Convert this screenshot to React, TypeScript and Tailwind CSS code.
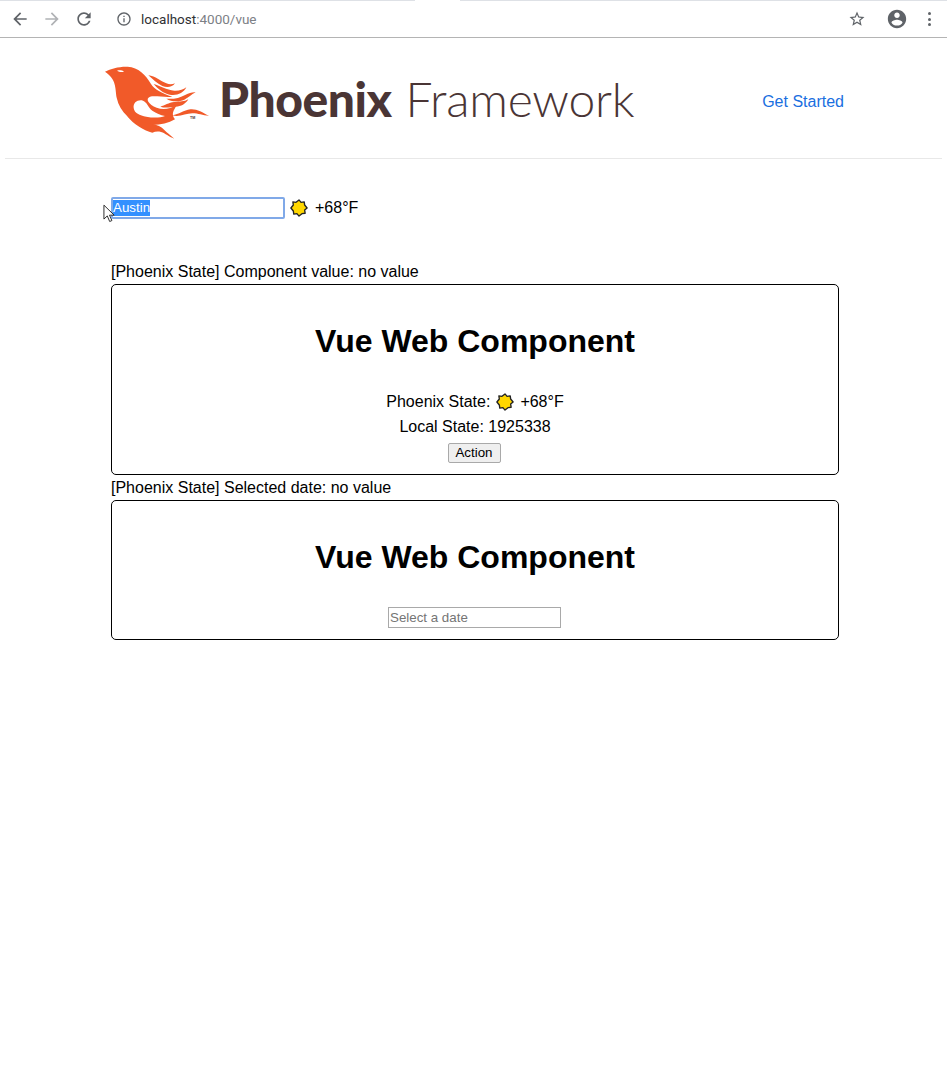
const ARROW = "M20 11H7.83l5.59-5.59L12 4l-8 8 8 8 1.41-1.41L7.83 13H20v-2z";

function Icon({ d, className }: { d: string; className: string }) {
  return (
    <svg viewBox="0 0 24 24" className={className} fill="currentColor">
      <path d={d} />
    </svg>
  );
}

function Sun() {
  return (
    <svg viewBox="0 0 20 20" className="h-[18px] w-[18px] shrink-0">
      <path
        d="M10 1l2.3 2.7 3.5-.5.5 3.5L19 10l-2.7 2.3.5 3.5-3.5.5L10 19l-2.3-2.7-3.5.5-.5-3.5L1 10l2.7-3.3-.5-3.5 3.5.5z"
        fill="#ffd700"
        stroke="#222"
        strokeWidth="1.5"
        strokeLinejoin="round"
      />
    </svg>
  );
}

function PhoenixBird() {
  return (
    <svg viewBox="0 0 375 270" className="h-[90px] w-[125px] shrink-0" fill="#f15a29">
      {/* body */}
      <path d="M30 47C48 38 72 31 98 32c32 2 54 24 70 52 10 16 32 28 64 38-22 3-52-4-67 0-15 6-5 23 20 33 20 8 40 3 60-7-10 17-17 27-5 42-25 15-60 20-90 15-40-5-75-35-85-80-5-30 0-55-35-78z" />
      {/* wing cut out */}
      <path d="M116 156c-2-16 12-26 28-22 12 4 15 20 28 30 12 8 24 13 38 16-16 6-36 6-56 2-20-4-36-10-38-26z" fill="#fff" />
      {/* eye */}
      <path d="M66 44c8-2 16-1 21 3-7 2-15 1-21-3z" fill="#fff" />
      {/* upper flames */}
      <path d="M160 58c22 2 36 18 54 24 10 4 18 3 26 0-8 12-24 14-38 8-16-7-28-20-42-32z" />
      <path d="M176 84c20 6 38 18 62 20 14 1 26-3 36-10-8 18-30 26-50 22-20-4-36-18-48-32z" />
      <path d="M196 152c14-4 24-12 42-14 16-2 30 0 42-8-8 14-22 22-38 22-16 1-30 5-46 0z" />
      <path d="M214 128c20 2 40-2 58-12 10-5 20-8 30-7-14 6-20 16-34 22-18 7-38 7-54-3z" />
      <path d="M232 178c20-2 34-16 54-18 18-2 36 8 56 20-20-2-32-8-50-8-20 0-38 12-60 6z" />
      {/* lower tail */}
      <path d="M96 180c20 10 44 20 74 24 16 2 30 8 38 18 8 8 16 14 30 26-18-6-26-16-40-20-10-3-18-1-26 2-24-6-56-24-76-50z" />
      <text x="285" y="188" fontSize="11" fontWeight="700" fill="#4a3535" fontFamily="'Liberation Sans', sans-serif">TM</text>
    </svg>
  );
}

function Card({ children }: { children: React.ReactNode }) {
  return (
    <div className="flex w-[728px] flex-col items-center rounded-[5px] border border-black">
      <h1 className="mt-[34px] text-[32px] leading-[44px] font-bold text-black">Vue Web Component</h1>
      {children}
    </div>
  );
}

export default function App() {
  return (
    <div className="relative min-h-[1072px] bg-white font-['Liberation_Sans',Arial,sans-serif] text-[16px] text-black">
      {/* browser toolbar */}
      <div className="flex h-[38px] items-center border-t border-b border-t-[#dee1e6] border-b-[#b4b4b4] text-[#5f6368]">
        <Icon d={ARROW} className="ml-[10px] h-[20px] w-[20px]" />
        <Icon d={ARROW} className="ml-[12px] h-[20px] w-[20px] rotate-180 text-[#b0b2b5]" />
        <Icon
          d="M17.65 6.35C16.2 4.9 14.21 4 12 4c-4.42 0-7.99 3.58-7.99 8s3.57 8 7.99 8c3.73 0 6.84-2.55 7.73-6h-2.08c-.82 2.33-3.04 4-5.65 4-3.31 0-6-2.69-6-6s2.69-6 6-6c1.66 0 3.14.69 4.22 1.78L13 11h7V4l-2.35 2.35z"
          className="ml-[12px] h-[20px] w-[20px]"
        />
        <Icon
          d="M11 7h2v2h-2zm0 4h2v6h-2zm1-9C6.48 2 2 6.48 2 12s4.48 10 10 10 10-4.48 10-10S17.52 2 12 2zm0 18c-4.41 0-8-3.59-8-8s3.59-8 8-8 8 3.59 8 8-3.59 8-8 8z"
          className="ml-[22px] h-[16px] w-[16px]"
        />
        <span className="ml-[9px] font-['Roboto',sans-serif] text-[13.5px] text-[#7c8085]">
          <span className="text-[#303134]">localhost</span>:4000/vue
        </span>
        <div className="ml-auto flex items-center">
          <Icon
            d="M22 9.24l-7.19-.62L12 2 9.19 8.63 2 9.24l5.46 4.73L5.82 21 12 17.27 18.18 21l-1.63-7.03L22 9.24zM12 15.4l-3.76 2.27 1-4.28-3.32-2.88 4.38-.38L12 6.1l1.71 4.04 4.38.38-3.32 2.88 1 4.28L12 15.4z"
            className="h-[18px] w-[18px]"
          />
          <Icon
            d="M12 2C6.48 2 2 6.48 2 12s4.48 10 10 10 10-4.48 10-10S17.52 2 12 2zm0 3c1.66 0 3 1.34 3 3s-1.34 3-3 3-3-1.34-3-3 1.34-3 3-3zm0 14.2c-2.5 0-4.71-1.28-6-3.22.03-1.99 4-3.08 6-3.08 1.99 0 5.97 1.09 6 3.08-1.29 1.94-3.5 3.22-6 3.22z"
            className="ml-[20px] h-[22px] w-[22px]"
          />
          <div className="mr-[16px] ml-[20px] flex flex-col gap-[2.5px]">
            <span className="h-[3px] w-[3px] rounded-full bg-[#5f6368]" />
            <span className="h-[3px] w-[3px] rounded-full bg-[#5f6368]" />
            <span className="h-[3px] w-[3px] rounded-full bg-[#5f6368]" />
          </div>
        </div>
      </div>
      {/* active tab's notch in the top strip */}
      <span className="absolute top-0 left-[415px] h-[1px] w-[45px] bg-white" />

      {/* site header */}
      <header className="mx-[5px] flex h-[121px] items-center border-b border-[#e8e8e8] pt-[6px] pr-[98px] pl-[90px]">
        <PhoenixBird />
        <div className="mb-[4px] ml-[-1px] flex items-baseline font-['Lato',sans-serif] text-[48px] leading-none text-[#4a3535]">
          <span className="font-black tracking-[-0.5px]">Phoenix</span>
          <span className="ml-[14px] font-light tracking-[-0.25px]">Framework</span>
        </div>
        <a href="#" className="mt-[2px] ml-auto text-[#1a6fdf]">Get Started</a>
      </header>

      <main className="flex flex-col items-start pl-[111px]">
        <div className="mt-[37px] flex items-center">
          <div className="flex h-[22px] w-[174px] items-center rounded-[2px] border-2 border-[#80a9e8] text-[13.33px]">
            <span className="bg-[#3390ff] leading-[16px] text-white">Austin</span>
          </div>
          <span className="ml-[5px]"><Sun /></span>
          <span className="ml-[7px]">+68°F</span>
        </div>

        <p className="mt-[43px] h-[21px] leading-[18px]">[Phoenix State] Component value: no value</p>
        <Card>
          <div className="mt-[26px] flex h-[25px] items-center">
            Phoenix State:
            <span className="mx-[6px]"><Sun /></span>
            +68°F
          </div>
          <div className="flex h-[25px] items-center">Local State: 1925338</div>
          <button className="mt-[4px] mb-[11px] ml-[-2px] h-[20px] w-[53px] rounded-[2px] border border-[#a9a9a9] bg-[#efefef] text-[13.33px] leading-none">
            Action
          </button>
        </Card>

        <p className="h-[25px] pt-[4px] leading-[18px]">[Phoenix State] Selected date: no value</p>
        <Card>
          <input
            placeholder="Select a date"
            className="mt-[28px] mb-[11px] ml-[-1px] h-[21px] w-[173px] border border-[#a9a9a9] px-[1px] text-[13.33px] placeholder:text-[#757575]"
          />
        </Card>
      </main>

      {/* mouse pointer over the input */}
      <svg viewBox="0 0 14 20" className="absolute top-[204px] left-[103px] h-[19px] w-[13px]">
        <path d="M1 1v15l3.6-3.4 2.6 6 2.4-1-2.6-5.8H12z" fill="#fff" stroke="#222" strokeWidth="1" />
      </svg>
    </div>
  );
}
